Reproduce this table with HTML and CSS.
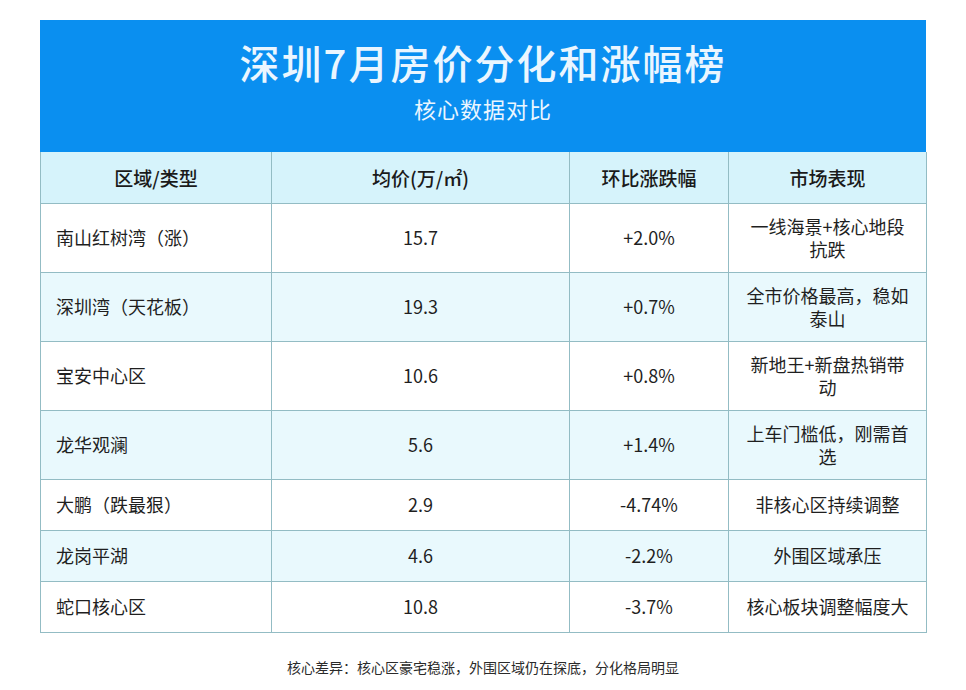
FILE: index.html
```html
<!DOCTYPE html>
<html lang="zh-CN">
<head>
<meta charset="utf-8">
<title>深圳7月房价分化和涨幅榜</title>
<link rel="stylesheet" href="styles.css">
</head>
<body>
<div class="page">
  <header class="banner">
    <h1 class="title">深圳7月房价分化和涨幅榜</h1>
    <p class="subtitle">核心数据对比</p>
  </header>
  <table class="data">
    <colgroup>
      <col class="c1"><col class="c2"><col class="c3"><col class="c4">
    </colgroup>
    <thead>
      <tr><th>区域/类型</th><th>均价(万/㎡)</th><th>环比涨跌幅</th><th>市场表现</th></tr>
    </thead>
    <tbody>
      <tr><td class="name">南山红树湾（涨）</td><td>15.7</td><td>+2.0%</td><td>一线海景+核心地段抗跌</td></tr>
      <tr><td class="name">深圳湾（天花板）</td><td>19.3</td><td>+0.7%</td><td>全市价格最高，稳如泰山</td></tr>
      <tr><td class="name">宝安中心区</td><td>10.6</td><td>+0.8%</td><td>新地王+新盘热销带动</td></tr>
      <tr><td class="name">龙华观澜</td><td>5.6</td><td>+1.4%</td><td>上车门槛低，刚需首选</td></tr>
      <tr><td class="name">大鹏（跌最狠）</td><td>2.9</td><td>-4.74%</td><td>非核心区持续调整</td></tr>
      <tr><td class="name">龙岗平湖</td><td>4.6</td><td>-2.2%</td><td>外围区域承压</td></tr>
      <tr><td class="name">蛇口核心区</td><td>10.8</td><td>-3.7%</td><td>核心板块调整幅度大</td></tr>
    </tbody>
  </table>
  <p class="note">核心差异：核心区豪宅稳涨，外围区域仍在探底，分化格局明显</p>
</div>
</body>
</html>
```

FILE: styles.css
```css
html, body {
  margin: 0;
  padding: 0;
  background: #ffffff;
}
body {
  font-family: "Noto Sans CJK SC", "Noto Sans", sans-serif;
  color: #1f1f1f;
}
.page {
  width: 886px;
  margin: 0 auto;
  padding-top: 20px;
}
.banner {
  background: #0a8ff0;
  height: 132px;
  box-sizing: border-box;
  padding-top: 16px;
  text-align: center;
  color: #eaf6ff;
}
.title {
  margin: 0;
  font-size: 40px;
  line-height: 52px;
  font-weight: 500;
  letter-spacing: 2px;
}
.subtitle {
  margin: 4px 0 0;
  font-size: 22px;
  line-height: 32px;
  font-weight: 400;
  letter-spacing: 1px;
}
.data {
  width: 886px;
  border-collapse: collapse;
  table-layout: fixed;
}
.c1 { width: 231px; }
.c2 { width: 298px; }
.c3 { width: 159px; }
.c4 { width: 198px; }
.data th,
.data td {
  border: 1px solid #93bcc4;
  text-align: center;
  vertical-align: middle;
  font-size: 18px;
  line-height: 23px;
  padding: 11px 14px;
  height: 51px;
  box-sizing: border-box;
}
.data th {
  background: #d6f3fb;
  font-weight: 500;
  font-size: 19px;
  color: #1a1a1a;
  border-top: none;
}
.data td.name {
  text-align: left;
  padding-left: 15px;
}
.data tbody tr:nth-child(even) td {
  background: #e9f9fd;
}
.data tbody tr:nth-child(odd) td {
  background: #ffffff;
}
.note {
  margin: 24px 0 0;
  text-align: center;
  font-size: 14px;
  line-height: 20px;
  color: #2a2a2a;
}
```
